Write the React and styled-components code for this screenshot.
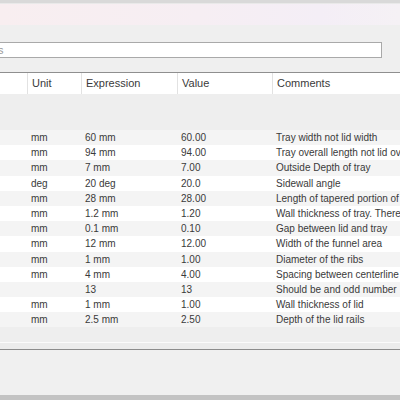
import styled, { createGlobalStyle } from "styled-components";

const GlobalStyle = createGlobalStyle`
  html, body {
    margin: 0;
    padding: 0;
    background: #efefef;
    overflow: hidden;
  }
  body {
    font-family: "Liberation Sans", Arial, sans-serif;
    color: #3a3a3a;
  }
`;

const rows = [
  { unit: "mm", expr: "60 mm", value: "60.00", comment: "Tray width not lid width" },
  { unit: "mm", expr: "94 mm", value: "94.00", comment: "Tray overall length not lid overall length" },
  { unit: "mm", expr: "7 mm", value: "7.00", comment: "Outside Depth of tray" },
  { unit: "deg", expr: "20 deg", value: "20.0", comment: "Sidewall angle" },
  { unit: "mm", expr: "28 mm", value: "28.00", comment: "Length of tapered portion of tray" },
  { unit: "mm", expr: "1.2 mm", value: "1.20", comment: "Wall thickness of tray. There is no lid" },
  { unit: "mm", expr: "0.1 mm", value: "0.10", comment: "Gap between lid and tray" },
  { unit: "mm", expr: "12 mm", value: "12.00", comment: "Width of the funnel area" },
  { unit: "mm", expr: "1 mm", value: "1.00", comment: "Diameter of the ribs" },
  { unit: "mm", expr: "4 mm", value: "4.00", comment: "Spacing between centerline of ribs" },
  { unit: "", expr: "13", value: "13", comment: "Should be and odd number" },
  { unit: "mm", expr: "1 mm", value: "1.00", comment: "Wall thickness of lid" },
  { unit: "mm", expr: "2.5 mm", value: "2.50", comment: "Depth of the lid rails" },
];

const COLS = "28px 54px 96px 95px 1fr";

function App() {
  return (
    <Window>
      <GlobalStyle />
      <TitleStrip />
      <TitleBand />
      <Toolbar>
        <SearchBox>s</SearchBox>
      </Toolbar>
      <Table>
        <HeaderRow>
          <HeadCell />
          <HeadCell>Unit</HeadCell>
          <HeadCell>Expression</HeadCell>
          <HeadCell>Value</HeadCell>
          <HeadCell $last>Comments</HeadCell>
        </HeaderRow>
        <GroupGap />
        {rows.map((r, i) => (
          <Row key={i} $odd={i % 2 === 1}>
            <Cell />
            <Cell>{r.unit}</Cell>
            <Cell>{r.expr}</Cell>
            <Cell>{r.value}</Cell>
            <Cell>{r.comment}</Cell>
          </Row>
        ))}
        <TableFill />
      </Table>
      <Splitter />
      <LowerPane />
      <StatusBar />
    </Window>
  );
}

const Window = styled.div`
  width: 400px;
  height: 400px;
  display: flex;
  flex-direction: column;
  overflow: hidden;
  background: #efefef;
`;

const TitleStrip = styled.div`
  height: 3px;
  background: #d9d9d9;
  border-bottom: 1px solid #e9e9e9;
`;

const TitleBand = styled.div`
  height: 21px;
  background: linear-gradient(90deg, #f8eef0 0%, #f6eef3 50%, #f4eef6 80%, #f5f1f5 100%);
`;

const Toolbar = styled.div`
  height: 47px;
  padding-top: 17px;
  box-sizing: border-box;
  display: flex;
  align-items: flex-start;
`;

const SearchBox = styled.div`
  width: 385px;
  height: 16px;
  margin-left: -3px;
  box-sizing: border-box;
  background: #fff;
  border: 1px solid #a9a9a9;
  font-size: 11px;
  line-height: 14px;
  color: #9a9a9a;
  padding-left: 0;
`;

const Table = styled.div`
  display: flex;
  flex-direction: column;
  border-top: 1px solid #8f8f8f;
`;

const HeaderRow = styled.div`
  display: grid;
  grid-template-columns: ${COLS};
  height: 21px;
  background: #fff;
`;

const HeadCell = styled.div`
  font-size: 11px;
  line-height: 21px;
  padding-left: 4px;
  color: #3a3a3a;
  border-right: ${(p) => (p.$last ? "none" : "1px solid #e2e2e2")};
  white-space: nowrap;
  overflow: hidden;
`;

const GroupGap = styled.div`
  height: 36px;
  background: #eeeeee;
`;

const Row = styled.div`
  display: grid;
  grid-template-columns: ${COLS};
  height: 15.2px;
  background: ${(p) => (p.$odd ? "#ffffff" : "#f4f4f4")};
`;

const Cell = styled.div`
  font-size: 10px;
  line-height: 15.2px;
  padding-left: 3px;
  white-space: nowrap;
  overflow: hidden;
  color: #3a3a3a;
`;

const TableFill = styled.div`
  height: 15px;
  background: #eeeeee;
  border-bottom: 1px solid #fbfbfb;
`;

const Splitter = styled.div`
  height: 6px;
  background: #ececec;
  border-bottom: 1px solid #8c8c8c;
  box-shadow: 0 2px 0 #e4e4e4, 0 5px 0 #cfcfcf;
`;

const LowerPane = styled.div`
  flex: 1;
  background: #f0f0f0;
`;

const StatusBar = styled.div`
  height: 5px;
  background: #c3c3c3;
`;

export default App;
